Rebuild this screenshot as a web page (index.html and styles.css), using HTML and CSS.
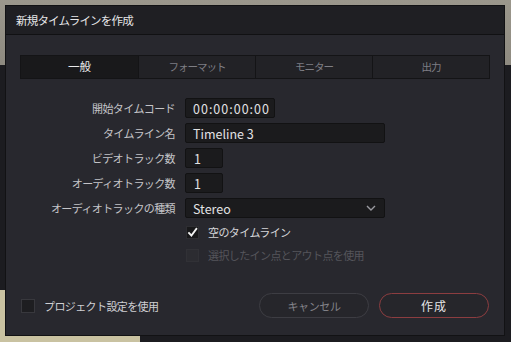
FILE: index.html
```html
<!DOCTYPE html>
<html lang="ja">
<head>
  <meta charset="UTF-8">
  <title>新規タイムラインを作成</title>
  <link rel="stylesheet" href="styles.css">
</head>
<body>
  <div class="dialog">
    <div class="dialog-title">新規タイムラインを作成</div>

    <div class="dialog-body">
      <div class="tabs">
        <div class="tab active">一般</div>
        <div class="tab">フォーマット</div>
        <div class="tab">モニター</div>
        <div class="tab">出力</div>
      </div>

      <div class="form">
        <label class="form-label">開始タイムコード</label>
        <div class="field field-tc">00:00:00:00</div>

        <label class="form-label">タイムライン名</label>
        <div class="field field-wide">Timeline 3</div>

        <label class="form-label">ビデオトラック数</label>
        <div class="field field-num">1</div>

        <label class="form-label">オーディオトラック数</label>
        <div class="field field-num">1</div>

        <label class="form-label">オーディオトラックの種類</label>
        <div class="field field-wide select">
          <span>Stereo</span>
          <svg class="chevron" width="10" height="6" viewBox="0 0 10 6">
            <path d="M1 1 L5 5 L9 1" fill="none" stroke="#9a9aa0" stroke-width="1.4"/>
          </svg>
        </div>

        <div></div>
        <div class="check-row">
          <span class="checkbox checked">
            <svg width="12" height="12" viewBox="0 0 12 12">
              <path d="M1.5 6.5 L4.8 9.8 L10.8 1.8" fill="none" stroke="#f2f2f2" stroke-width="2"/>
            </svg>
          </span>
          <span class="check-text">空のタイムライン</span>
        </div>

        <div></div>
        <div class="check-row disabled">
          <span class="checkbox"></span>
          <span class="check-text">選択したイン点とアウト点を使用</span>
        </div>
      </div>

      <div class="footer">
        <div class="check-row project">
          <span class="checkbox big"></span>
          <span class="check-text">プロジェクト設定を使用</span>
        </div>
        <div class="buttons">
          <button class="btn btn-cancel">キャンセル</button>
          <button class="btn btn-create">作成</button>
        </div>
      </div>
    </div>
  </div>
</body>
</html>
```

FILE: styles.css
```css
html, body {
  margin: 0;
  height: 342px;
  overflow: hidden;
}
body {
  font-family: "Noto Sans CJK JP", "Noto Sans", sans-serif;
  font-size: 11px;
  letter-spacing: -0.6px;
  color: #d0d0d4;
  background:
    linear-gradient(#9b978c, #8e8a80) 0 0 / 100% 65px no-repeat,
    linear-gradient(#c9c2a1, #c9c2a1) 0 290px / 140px 52px no-repeat,
    #1c1c20;
  padding: 5px 6px 6px 5px;
  box-sizing: border-box;
}
.dialog {
  width: 500px;
  height: 331px;
  box-sizing: border-box;
  background: #28282e;
  border: 1px solid #121214;
  display: flex;
  flex-direction: column;
}
.dialog-title {
  height: 28px;
  line-height: 29px;
  padding-left: 10px;
  background: #1f1f23;
  border-bottom: 1px solid #111113;
  color: #e6e6e8;
  font-size: 11.5px;
  letter-spacing: -0.8px;
}
.dialog-body {
  flex: 1;
  padding: 20px 14px 0 14px;
  display: flex;
  flex-direction: column;
}
.tabs {
  display: grid;
  grid-template-columns: repeat(4, 1fr);
  height: 22px;
  border: 1px solid #141416;
  background: #222226;
}
.tab {
  text-align: center;
  line-height: 21px;
  color: #7e7e84;
  border-left: 1px solid #141416;
  font-size: 10.5px;
  letter-spacing: -1px;
}
.tab:first-child {
  border-left: none;
}
.tab.active {
  background: #19191b;
  color: #e8e8ea;
  font-size: 11.5px;
  letter-spacing: 0;
}
.form {
  display: grid;
  grid-template-columns: 155px auto;
  column-gap: 10px;
  row-gap: 5px;
  margin-top: 19px;
  align-items: center;
  justify-items: start;
}
.form-label {
  justify-self: end;
  color: #c4c4c8;
  line-height: 20px;
}
.field {
  height: 20px;
  line-height: 19px;
  box-sizing: border-box;
  padding-left: 7px;
  background: #1b1b1d;
  border: 1px solid #121213;
  border-radius: 2px;
  color: #e2e2e4;
  font-size: 12.5px;
  letter-spacing: 0;
}
.field-tc {
  width: 90px;
  font-size: 12.5px;
  letter-spacing: 1px;
}
.field-wide {
  width: 200px;
}
.field-num {
  width: 38px;
  padding-left: 8px;
}
.select {
  display: flex;
  justify-content: space-between;
  align-items: center;
  padding-right: 8px;
}
.check-row {
  display: flex;
  align-items: center;
  gap: 9px;
  height: 18px;
  line-height: 18px;
  margin-left: 1px;
}
.checkbox {
  width: 13px;
  height: 13px;
  box-sizing: border-box;
  background: #1c1c1e;
  border: 1px solid #2e2e32;
  display: flex;
  align-items: center;
  justify-content: center;
}
.checkbox.checked {
  background: #18181a;
}
.check-text {
  color: #d4d4d8;
}
.disabled .checkbox {
  background: #2c2c31;
  border-color: #313136;
}
.disabled .check-text {
  color: #55555b;
}
.footer {
  margin-top: 29px;
  display: flex;
  justify-content: space-between;
  align-items: center;
}
.check-row.project {
  margin-left: 1px;
}
.checkbox.big {
  width: 14px;
  height: 14px;
  background: #1e1e21;
  border-color: #38383d;
}
.project .check-text {
  color: #cfcfd3;
}
.buttons {
  display: flex;
  gap: 10px;
  margin-right: 1px;
}
.btn {
  width: 110px;
  height: 25px;
  border-radius: 13px;
  background: #26262b;
  font-family: inherit;
  font-size: 11px;
  letter-spacing: -0.4px;
  cursor: pointer;
}
.btn-cancel {
  border: 1px solid #3d3d43;
  color: #838389;
}
.btn-create {
  border: 1px solid #8c3d40;
  color: #e4e4e6;
  font-size: 12px;
  letter-spacing: 1px;
}
```
